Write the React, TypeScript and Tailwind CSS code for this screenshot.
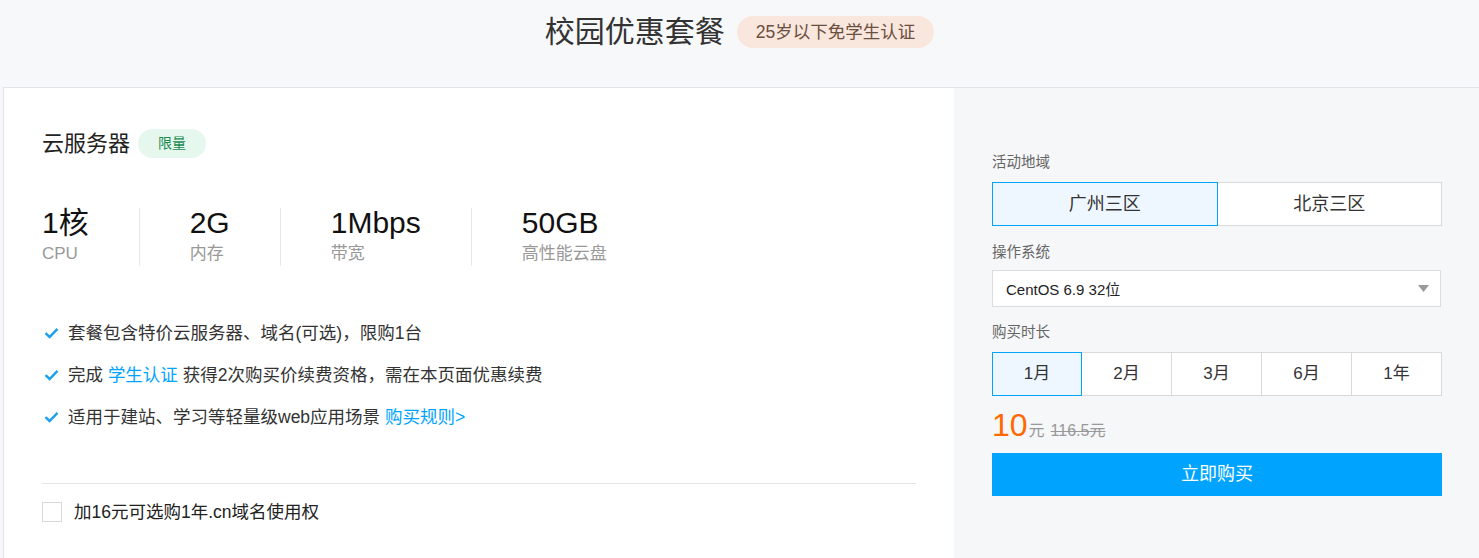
const font = "font-['Liberation_Sans','Noto_Sans_CJK_SC',sans-serif]";

const specs = [
  { value: "1核", label: "CPU" },
  { value: "2G", label: "内存" },
  { value: "1Mbps", label: "带宽" },
  { value: "50GB", label: "高性能云盘" },
];

const durations = ["1月", "2月", "3月", "6月", "1年"];

function Check() {
  return (
    <svg width="15" height="12" viewBox="0 0 15 12" className="shrink-0">
      <path d="M1.5 6.2 L5.6 10 L13.5 1.8" fill="none" stroke="#1aa0f0" strokeWidth="2.4" />
    </svg>
  );
}

function Label({ children }: { children: React.ReactNode }) {
  return <div className="text-[14.5px] leading-[20px] text-[#666]">{children}</div>;
}

export default function App() {
  return (
    <div className={`${font} min-h-[558px] bg-[#f7f8fa] text-[#333]`}>
      <header className="flex h-[87px] items-start justify-center gap-3 pt-[12px]">
        <h1 className="text-[30px] leading-[40px] text-[#333]">校园优惠套餐</h1>
        <span className="mt-[4px] rounded-full bg-[#f9e6dc] px-[19px] text-[17.5px] leading-[32px] text-[#6b4f3f]">
          25岁以下免学生认证
        </span>
      </header>

      <div className="ml-[3px] flex border-l border-t border-[#e1e3e8]">
        <section className="w-[950px] shrink-0 bg-white px-[38px] pb-[38px] pt-[41px]">
          <div className="flex h-[29px] items-center gap-2">
            <h2 className="text-[22px] leading-[29px] text-[#222]">云服务器</h2>
            <span className="rounded-full bg-[#e6f7ee] px-[20px] text-[14px] leading-[29px] text-[#1b8a4f]">
              限量
            </span>
          </div>

          <div className="mt-[50px] flex">
            {specs.map((s, i) => (
              <div
                key={s.label}
                className={
                  i === 0
                    ? "pr-[50px]"
                    : "border-l border-[#e8e8e8] pl-[50px] pr-[50px]"
                }
              >
                <div className="text-[30px] leading-[30px] text-[#111]">{s.value}</div>
                <div className="mt-[4px] text-[17px] leading-[24px] text-[#999]">{s.label}</div>
              </div>
            ))}
          </div>

          <ul className="mt-[46px] text-[17.5px] leading-[42px] text-[#333]">
            <li className="flex items-center gap-[9px] pl-[2px]">
              <Check />
              <span>套餐包含特价云服务器、域名(可选)，限购1台</span>
            </li>
            <li className="flex items-center gap-[9px] pl-[2px]">
              <Check />
              <span>
                完成 <a className="text-[#00a4ff]">学生认证</a> 获得2次购买价续费资格，需在本页面优惠续费
              </span>
            </li>
            <li className="flex items-center gap-[9px] pl-[2px]">
              <Check />
              <span>
                适用于建站、学习等轻量级web应用场景 <a className="text-[#00a4ff]">购买规则&gt;</a>
              </span>
            </li>
          </ul>

          <div className="mt-[45px] border-t border-[#e3e3e3] pt-[14px]">
            <label className="flex items-center gap-[12px] text-[17.5px] leading-[28px] text-[#222]">
              <span className="h-[20px] w-[20px] border border-[#d9d9d9] bg-white" />
              加16元可选购1年.cn域名使用权
            </label>
          </div>
        </section>

        <aside className="flex-1 bg-[#f6f7f9] px-[38px] pt-[64px]">
          <div className="w-[450px]">
            <Label>活动地域</Label>
            <div className="mt-[10px] flex">
              <button className="h-[44px] flex-1 border border-[#00a4ff] bg-[#eef7ff] text-[18px] text-[#333]">
                广州三区
              </button>
              <button className="h-[44px] flex-1 border border-l-0 border-[#d9d9d9] bg-white text-[18px] text-[#333]">
                北京三区
              </button>
            </div>

            <div className="mt-[16px]">
              <Label>操作系统</Label>
            </div>
            <div className="mt-[8px] flex h-[37px] w-[449px] items-center justify-between border border-[#dcdcdc] bg-white pl-[13px] pr-[11px]">
              <span className="pt-[3px] text-[15px] text-[#222]">CentOS 6.9 32位</span>
              <svg width="11" height="7" viewBox="0 0 11 7">
                <path d="M0 0 H11 L5.5 7 Z" fill="#999" />
              </svg>
            </div>

            <div className="mt-[15px]">
              <Label>购买时长</Label>
            </div>
            <div className="mt-[10px] flex">
              {durations.map((d, i) => (
                <button
                  key={d}
                  className={
                    i === 0
                      ? "h-[44px] w-[90px] border border-[#00a4ff] bg-[#eef7ff] text-[17px] text-[#333]"
                      : "h-[44px] w-[90px] border border-l-0 border-[#d9d9d9] bg-white text-[17px] text-[#333]"
                  }
                >
                  {d}
                </button>
              ))}
            </div>

            <div className="mt-[10px] flex h-[38px] items-end pb-[3px]">
              <span className="text-[32px] leading-[32px] text-[#ff6a00]">10</span>
              <span className="ml-[1px] text-[16px] leading-[20px] text-[#999]">元</span>
              <span className="ml-[6px] text-[16px] leading-[20px] text-[#999] line-through">116.5元</span>
            </div>

            <button className="mt-[9px] h-[43px] w-full bg-[#00a4ff] text-[18px] text-white">
              立即购买
            </button>
          </div>
        </aside>
      </div>
    </div>
  );
}
